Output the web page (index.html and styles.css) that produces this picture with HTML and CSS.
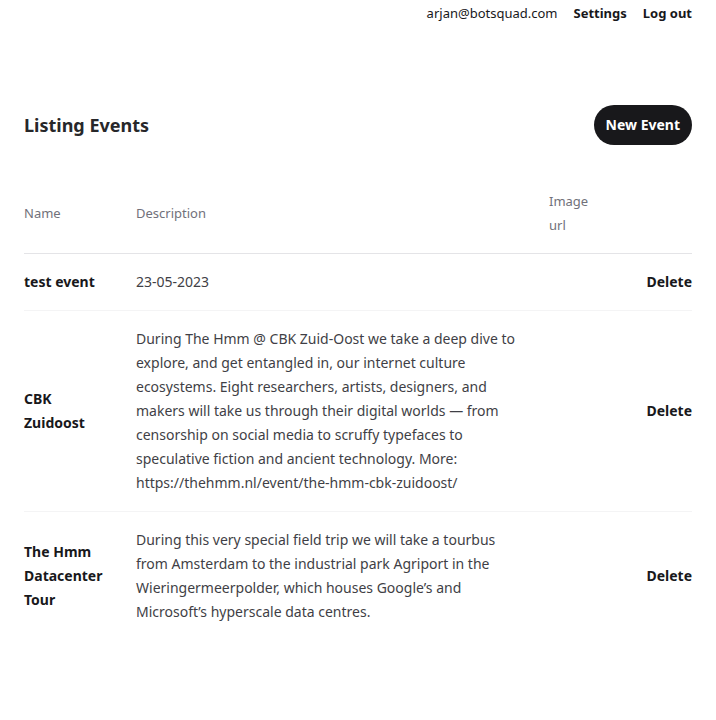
FILE: index.html
```html
<!DOCTYPE html>
<html lang="en">
<head>
<meta charset="utf-8">
<title>Listing Events</title>
<link rel="stylesheet" href="styles.css">
</head>
<body>
<ul class="topnav">
  <li class="topnav-email">arjan@botsquad.com</li>
  <li><a class="topnav-link" href="#">Settings</a></li>
  <li><a class="topnav-link" href="#">Log out</a></li>
</ul>
<main class="main">
  <div class="container">
    <header class="page-header">
      <h1 class="page-title">Listing Events</h1>
      <a class="btn" href="#">New Event</a>
    </header>
    <table class="table">
      <colgroup>
        <col class="col-name">
        <col class="col-desc">
        <col class="col-img">
        <col class="col-act">
      </colgroup>
      <thead>
        <tr>
          <th>Name</th>
          <th>Description</th>
          <th>Image url</th>
          <th class="th-act"></th>
        </tr>
      </thead>
      <tbody>
        <tr>
          <td><div class="cell"><span class="strong">test event</span></div></td>
          <td><div class="cell">23-05-2023</div></td>
          <td><div class="cell"></div></td>
          <td><div class="cell act"><a href="#" class="strong-link">Delete</a></div></td>
        </tr>
        <tr>
          <td><div class="cell"><span class="strong">CBK Zuidoost</span></div></td>
          <td><div class="cell">During The Hmm @ CBK Zuid-Oost we take a deep dive to explore, and get entangled in, our internet culture ecosystems. Eight researchers, artists, designers, and makers will take us through their digital worlds — from censorship on social media to scruffy typefaces to speculative fiction and ancient technology. More: https://thehmm.nl/event/the-hmm-cbk-zuidoost/</div></td>
          <td><div class="cell"></div></td>
          <td><div class="cell act"><a href="#" class="strong-link">Delete</a></div></td>
        </tr>
        <tr>
          <td><div class="cell"><span class="strong">The Hmm Datacenter Tour</span></div></td>
          <td><div class="cell">During this very special field trip we will take a tourbus from Amsterdam to the industrial park Agriport in the Wieringermeerpolder, which houses Google’s and Microsoft’s hyperscale data centres.</div></td>
          <td><div class="cell"></div></td>
          <td><div class="cell act"><a href="#" class="strong-link">Delete</a></div></td>
        </tr>
      </tbody>
    </table>
  </div>
</main>
</body>
</html>
```
FILE: styles.css
```css
* { box-sizing: border-box; }
html, body { margin: 0; padding: 0; background: #fff; }
body {
  font-family: "Noto Sans", sans-serif;
  color: #18181b;
  -webkit-font-smoothing: antialiased;
}
a { text-decoration: none; color: inherit; }

.topnav {
  list-style: none;
  margin: 0;
  padding: 1px 24px 0;
  display: flex;
  align-items: center;
  justify-content: flex-end;
  gap: 16px;
}
.topnav li { font-size: 13px; line-height: 24px; color: #18181b; }
.topnav-link { font-weight: 700; color: #18181b; }

.main { padding: 80px 24px; }
.container { max-width: 672px; margin: 0 auto; }

.page-header {
  display: flex;
  align-items: center;
  justify-content: space-between;
  gap: 24px;
}
.page-title {
  margin: 0;
  font-size: 18px;
  line-height: 32px;
  font-weight: 700;
  color: #27272a;
}
.btn {
  display: inline-block;
  background: #18181b;
  color: #fff;
  font-size: 14px;
  line-height: 24px;
  font-weight: 700;
  padding: 8px 12px;
  border-radius: 9999px;
}

.table {
  margin-top: 44px;
  width: 100%;
  border-collapse: collapse;
  table-layout: fixed;
}
.col-name { width: 112px; }
.col-desc { width: 413px; }
.col-img { width: 70px; }
.col-act { width: auto; }

.table thead th {
  text-align: left;
  font-size: 13px;
  line-height: 24px;
  font-weight: 400;
  color: #71717a;
  padding: 0 24px 16px 0;
  vertical-align: middle;
}
.table thead th.th-act { padding-right: 0; }
.table tbody {
  border-top: 1px solid #e4e4e7;
  font-size: 14px;
  line-height: 24px;
  color: #3f3f46;
}
.table tbody tr + tr { border-top: 1px solid #f4f4f5; }
.table td { padding: 0; vertical-align: middle; }
.cell { padding: 16px 24px 16px 0; }
.cell.act { padding-right: 0; text-align: right; white-space: nowrap; }
.strong { font-weight: 700; color: #18181b; }
.strong-link { font-weight: 700; color: #18181b; }
```
